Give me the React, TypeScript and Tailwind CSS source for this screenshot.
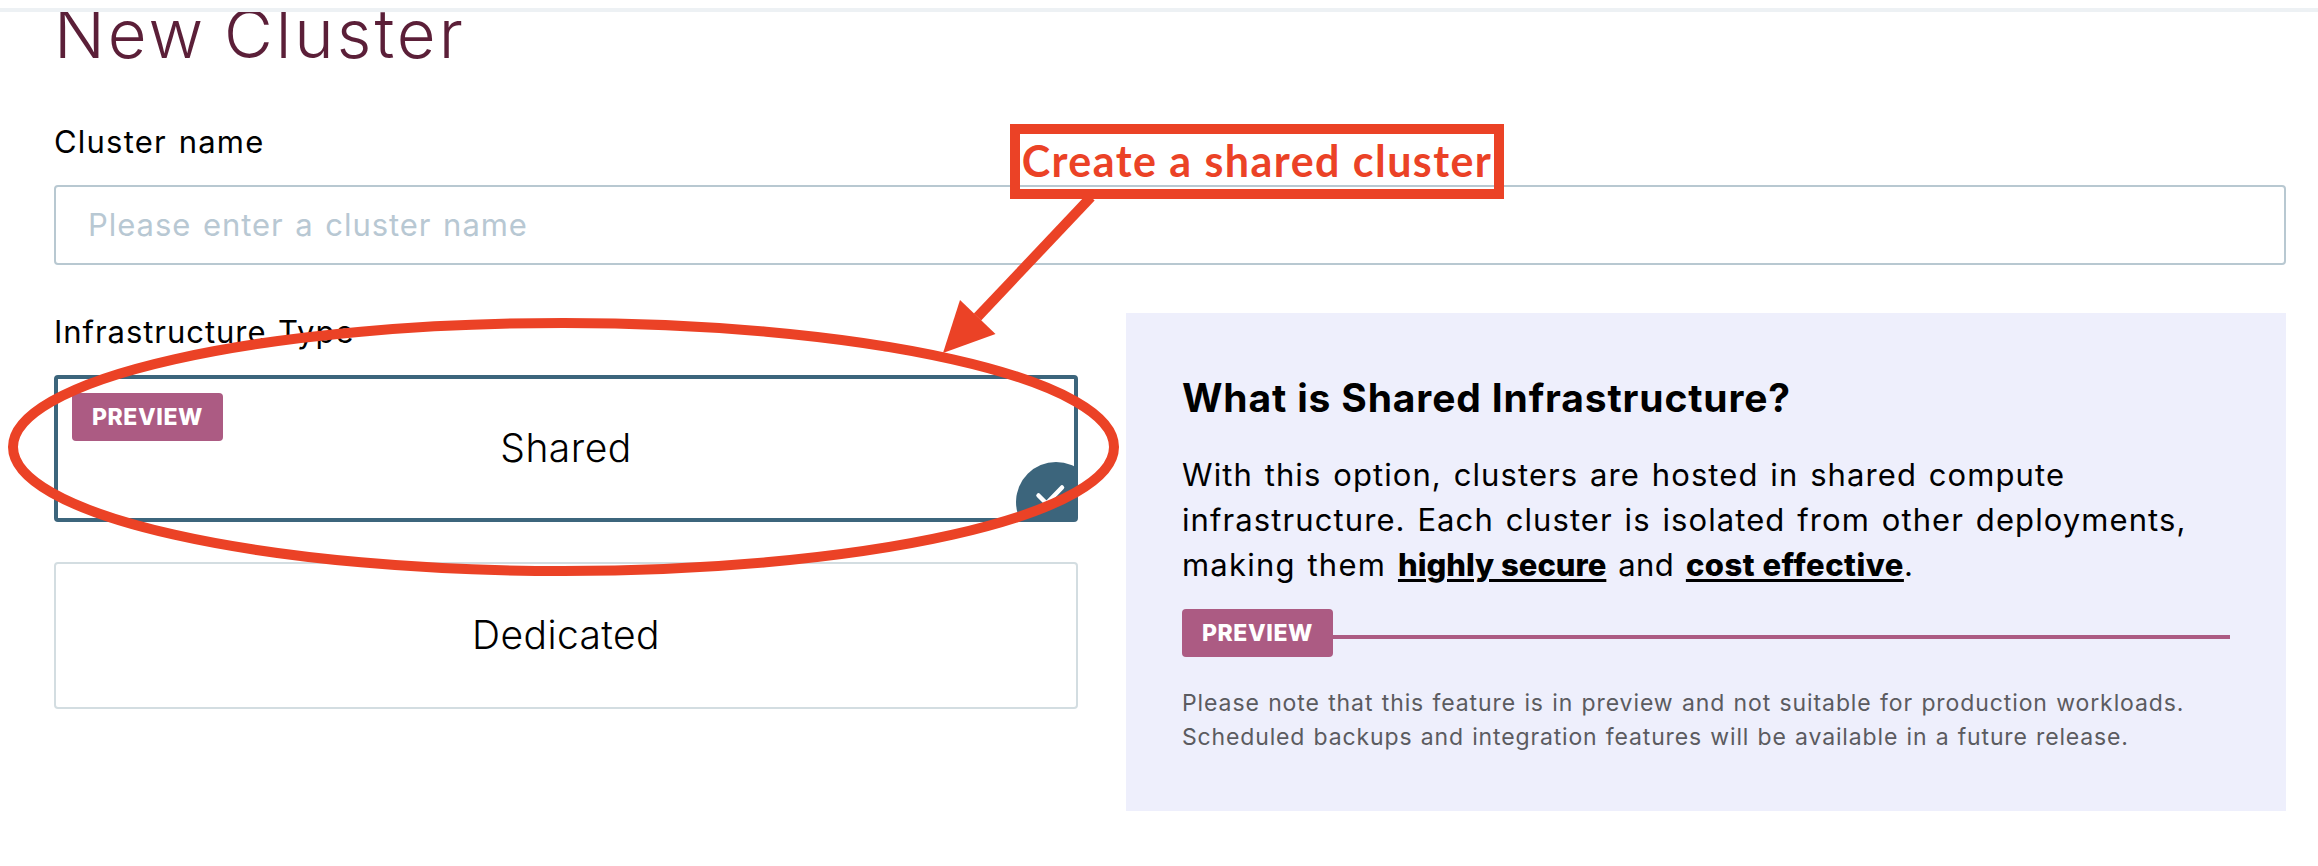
import type { ReactNode } from "react";

function PreviewBadge() {
  return (
    <span className="flex h-12 w-[151px] shrink-0 items-center justify-center rounded bg-[#ac5b83] text-[23px] font-extrabold tracking-[0.6px] text-white">
      PREVIEW
    </span>
  );
}

function FieldLabel({ children }: { children: ReactNode }) {
  return <div className="text-[31px] leading-[38px] tracking-[0.95px] [word-spacing:2px]">{children}</div>;
}

function SelectedCorner() {
  return (
    <span className="absolute -right-[22px] -bottom-[24px] flex size-20 rounded-full bg-[#3c657c]">
      <svg viewBox="0 0 80 80" className="size-20" fill="none" stroke="#fff" strokeWidth="4.5" strokeLinecap="round" strokeLinejoin="round">
        <path d="M22.5 33.5 30.5 41.5 46 25.5" />
      </svg>
    </span>
  );
}

function InfrastructureOptions() {
  return (
    <div className="flex w-[1024px] flex-col">
      <FieldLabel>Infrastructure Type</FieldLabel>
      <button className="relative mt-6 flex h-[147px] items-center justify-center overflow-hidden rounded border-4 border-[#3c657c] text-[39px] font-light tracking-[0.5px]">
        <span className="absolute left-[14px] top-[14px]">
          <PreviewBadge />
        </span>
        Shared
        <SelectedCorner />
      </button>
      <button className="mt-10 flex h-[147px] items-center justify-center rounded border-2 border-[#d3dde1] text-[39px] font-light tracking-[0.4px]">
        Dedicated
      </button>
    </div>
  );
}

function InfoPanel() {
  return (
    <section className="flex h-[498px] w-[1160px] flex-col bg-[#eeeffc] px-14 pt-[61px]">
      <h2 className="text-[39px] font-bold leading-[48px] tracking-[0.85px]">
        What is Shared Infrastructure?
      </h2>
      <p className="mt-[30px] whitespace-nowrap text-[31px] leading-[45px] tracking-[1.09px] [word-spacing:2px]">
        With this option, clusters are hosted in shared compute
        <br />
        infrastructure. Each cluster is isolated from other deployments,
        <br />
        <span className="tracking-[1.2px]">making them </span>
        <span className="font-extrabold tracking-[0px] underline decoration-[3px] underline-offset-[3px] [word-spacing:0px]">
          highly secure
        </span>{" "}
        <span className="tracking-[0.4px]">and</span>{" "}
        <span className="font-extrabold tracking-[0.5px] underline decoration-[3px] underline-offset-[3px] [word-spacing:0px]">
          cost effective
        </span>
        .
      </p>
      <div className="mt-[22px] flex">
        <PreviewBadge />
        <div className="mt-[26px] h-1 flex-1 bg-[#ac5b83]" />
      </div>
      <p className="mt-[29px] whitespace-nowrap text-[23px] leading-[34px] tracking-[0.9px] text-[#5b5b60] [word-spacing:1px]">
        Please note that this feature is in preview and not suitable for production workloads.
        <br />
        <span className="tracking-[0.85px]">
          Scheduled backups and integration features will be available in a future release.
        </span>
      </p>
    </section>
  );
}

function Annotations() {
  return (
    <div className="pointer-events-none absolute inset-0">
      <svg viewBox="0 0 2318 866" className="absolute inset-0 h-full w-full" fill="none" stroke="#eb4226" strokeWidth="10">
        <ellipse cx="563.5" cy="447" rx="550.5" ry="124" />
        <path d="M1091 197 977.5 317" />
        <path d="M943 353 960 300 995.5 334Z" fill="#eb4226" stroke="none" />
      </svg>
      <div className="absolute left-[1010px] top-[124px] flex h-[75px] w-[494px] items-center justify-center whitespace-nowrap border-10 border-[#eb4226] pb-[2px] font-['Lato',sans-serif] text-[43px] font-bold leading-[52px] tracking-[1.45px] text-[#eb4226]">
        Create a shared cluster
      </div>
    </div>
  );
}

export default function App() {
  return (
    <div className="relative h-[866px] w-[2318px] overflow-hidden bg-white font-['Inter',sans-serif] text-black">
      <div className="mt-2 h-1 bg-[#edf1f4]" />
      <main className="flex h-[854px] flex-col overflow-hidden pl-[54px] pr-8">
        <h1 className="text-[67px] font-light leading-[44px] tracking-[3px] text-[#5b1f38] [word-spacing:-4px]">
          New Cluster
        </h1>
        <div className="mt-[67px] [&>div]:tracking-[1.2px]">
          <FieldLabel>Cluster name</FieldLabel>
        </div>
        <input
          className="mt-6 h-20 shrink-0 rounded border-2 border-[#b8c8d1] px-8 pb-[2px] text-[31px] tracking-[0.95px] [word-spacing:2px] placeholder:text-[#b8c8d3]"
          placeholder="Please enter a cluster name"
        />
        <div className="mt-12 flex justify-between">
          <InfrastructureOptions />
          <InfoPanel />
        </div>
      </main>
      <Annotations />
    </div>
  );
}
